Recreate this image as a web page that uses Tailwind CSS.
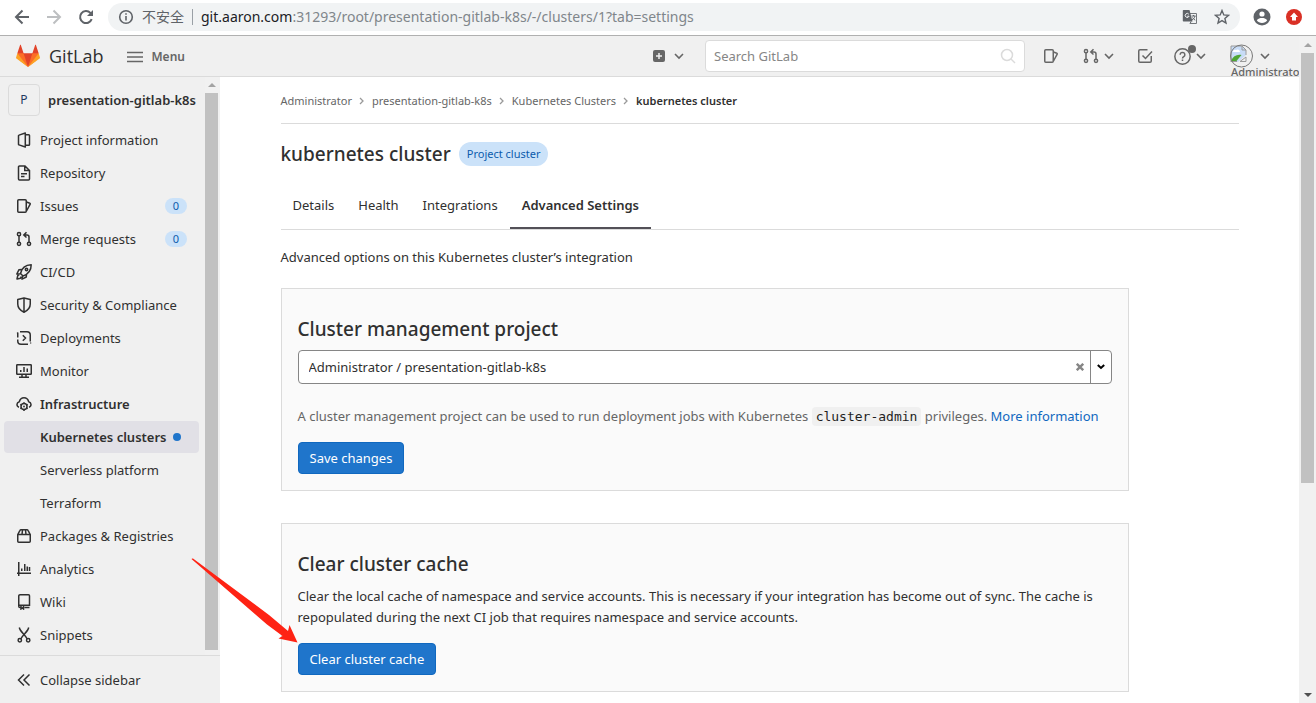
<!DOCTYPE html>
<html lang="en">
<head>
<meta charset="utf-8">
<meta name="viewport" content="width=device-width, initial-scale=1">
<title>kubernetes cluster · GitLab</title>
<script src="https://cdn.jsdelivr.net/npm/@tailwindcss/browser@4"></script>
</head>
<body class="flex h-screen flex-col overflow-hidden bg-white font-['Noto_Sans','Noto_Sans_CJK_SC',sans-serif] text-[13px] leading-5 text-[#303030]">

<!-- Browser toolbar -->
<div class="flex h-9 shrink-0 items-center border-b border-[#b0b0b0] pr-3 pb-px pl-3 text-[#5f6368]">
  <button aria-label="Back" class="flex h-5 w-5 items-center justify-center"><svg width="16" height="16" viewBox="0 0 16 16" fill="none" stroke="currentColor" stroke-width="2"><path d="M15 8H2M8.500 1.500 2 8l6.500 6.500"/></svg></button>
  <button aria-label="Forward" class="ml-3 flex h-5 w-5 items-center justify-center text-[#bdbfc1]"><svg width="16" height="16" viewBox="0 0 16 16" fill="none" stroke="currentColor" stroke-width="2"><path d="M1 8h13M7.500 1.500 14 8l-6.500 6.500"/></svg></button>
  <button aria-label="Reload" class="ml-3 flex h-5 w-5 items-center justify-center"><svg width="16" height="16" viewBox="0 0 16 16" fill="none" stroke="currentColor" stroke-width="2"><path d="M13.700 10.200A6 6 0 1 1 12.400 3.900L14 5.500"/><path d="M15 1v6H9z" fill="currentColor" stroke="none"/></svg></button>
  <div class="ml-3 flex h-7 flex-1 items-center rounded-full bg-[#f1f3f4] pr-2.5 pl-2.5">
    <svg width="16" height="16" viewBox="0 0 16 16" fill="none" stroke="currentColor" stroke-width="1.600"><circle cx="8" cy="8" r="6.300"/><path d="M8 7v4.500M8 4.200v1.600"/></svg>
    <span class="ml-2 text-[14px]">不安全</span>
    <span class="mx-2 h-4 w-px bg-[#9aa0a6]"></span>
    <span class="flex-1 text-[14px] whitespace-nowrap text-[#80868b]"><span class="text-[#202124]">git.aaron.com</span>:31293/root/presentation-gitlab-k8s/-/clusters/1?tab=settings</span>
    <button aria-label="Translate" class="flex h-4 w-4 items-center justify-center"><svg width="16" height="16" viewBox="0 0 16 16" fill="none"><path d="M6.500 4.500h8v10h-6" stroke="#74787c" stroke-width="1"/><path d="M1.500 1h6l3 11.500h-9A.8.8 0 0 1 .8 11.700V1.800A.8.8 0 0 1 1.500 1z" fill="#5f6368"/><path d="M6.800 5.200a2 2 0 1 0 .3 2H5.200" stroke="#f1f3f4"/><path d="M9.500 7h4M11.500 6v1M13 7c-.5 2-1.500 3-3 4M10.500 8.500c.5 1 1.500 2 2.700 2.700M8 15l1-2.500" stroke="#5f6368"/></svg></button>
    <button aria-label="Bookmark" class="ml-4 flex h-4 w-4 items-center justify-center"><svg width="16" height="16" viewBox="0 0 16 16" fill="none" stroke="currentColor" stroke-width="1.400"><path d="m8 1.500 1.800 4.400 4.700.4-3.600 3.100 1.100 4.600L8 11.600 4 14l1.100-4.600L1.500 6.300l4.700-.4z"/></svg></button>
  </div>
  <button aria-label="Profile" class="ml-3 flex h-5 w-5 items-center justify-center"><svg width="18" height="18" viewBox="0 0 18 18"><circle cx="9" cy="9" r="8.500" fill="currentColor"/><circle cx="9" cy="6" r="2.600" fill="#fff"/><path d="M3.800 12.200c1-1.700 3.400-2.200 5.200-2.200s4.200.5 5.200 2.200a6.200 6.200 0 0 1-10.400 0z" fill="#fff"/></svg></button>
  <button aria-label="Update" class="ml-3 flex h-5 w-5 items-center justify-center"><svg width="16" height="16" viewBox="0 0 16 16"><circle cx="8" cy="8" r="8" fill="#d93025"/><path d="M8 3.500 12 8h-2v3.500H6V8H4z" fill="#fff"/></svg></button>
</div>

<div class="flex min-h-0 flex-1">
<div class="flex min-w-0 flex-1 flex-col">

<!-- GitLab header -->
<header class="flex h-[41px] shrink-0 items-center overflow-hidden border-b border-[#dbdbdb] bg-[#f0f0f0] pl-4 text-[#666]">
  <a href="#" class="flex items-center font-['Open_Sans',sans-serif] text-[18px] font-medium text-[#303030]">
    <svg width="24" height="24" viewBox="0 0 36 36" class="mr-[9px]"><path fill="#e24329" d="M2 14l9.380 9v-9l-4-12.280c-.205-.632-1.176-.632-1.380 0z"/><path fill="#e24329" d="M34 14l-9.380 9v-9l4-12.280c.205-.632 1.176-.632 1.380 0z"/><path fill="#e24329" d="M18 34.380 3 14h30z"/><path fill="#fc6d26" d="M18 34.380 11.380 14H2l4 11z"/><path fill="#fc6d26" d="M18 34.380 24.620 14H34l-4 11z"/><path fill="#fca326" d="M2 14 .1 20.160c-.18.565 0 1.200.5 1.560l17.420 12.660z"/><path fill="#fca326" d="M34 14l1.900 6.160c.18.565 0 1.200-.5 1.560L18 34.380z"/></svg>
    GitLab
  </a>
  <button class="ml-6 flex items-center gap-2 pt-px text-[12px] font-semibold"><svg width="16" height="16" viewBox="0 0 16 16" stroke="currentColor" stroke-width="1.500"><path d="M0 3.500h16M0 8h16M0 12.500h16"/></svg>Menu</button>
  <button aria-label="Create new" class="ml-auto flex items-center gap-2">
    <svg width="12" height="12" viewBox="0 0 12 12"><rect width="12" height="12" rx="2" fill="#666"/><path d="M6 3v6M3 6h6" stroke="#f0f0f0" stroke-width="1.500"/></svg>
    <svg width="12" height="12" viewBox="0 0 12 12" fill="none" stroke="currentColor" stroke-width="1.600"><path d="m2 4 4 4 4-4"/></svg>
  </button>
  <label class="ml-5 flex h-8 w-[320px] items-center rounded border border-[#dbdbdb] bg-white px-2">
    <input aria-label="Search GitLab" placeholder="Search GitLab" class="min-w-0 flex-1 bg-transparent outline-none placeholder:text-[#868686]">
    <svg width="16" height="16" viewBox="0 0 16 16" fill="none" stroke="#dbdbdb" stroke-width="1.500"><circle cx="7" cy="7" r="5.500"/><path d="m11 11 4 4"/></svg>
  </label>
  <button aria-label="Issues" class="ml-[18px]"><svg width="16" height="16" viewBox="0 0 16 16" fill="none" stroke="currentColor" stroke-width="1.500"><rect x="1.750" y="1.750" width="8.500" height="12.500" rx="1"/><path d="m10.500 4 3.300 1.200a.7.700 0 0 1 .4.900L10.500 13"/></svg></button>
  <button aria-label="Merge requests" class="ml-6 flex items-center gap-1">
    <svg width="16" height="16" viewBox="0 0 16 16" fill="none" stroke="currentColor" stroke-width="1.500"><circle cx="3" cy="3.200" r="1.600"/><circle cx="3" cy="12.800" r="1.600"/><circle cx="13" cy="12.800" r="1.600"/><path d="M3 5v6M13 11V6a2 2 0 0 0-2-2H8.200M10.500 1.300 7.800 4l2.700 2.500"/></svg>
    <svg width="12" height="12" viewBox="0 0 12 12" fill="none" stroke="currentColor" stroke-width="1.600"><path d="m2 4 4 4 4-4"/></svg>
  </button>
  <button aria-label="To-Do List" class="ml-[22px]"><svg width="16" height="16" viewBox="0 0 16 16" fill="none" stroke="currentColor" stroke-width="1.500"><path d="M10.500 1.750H3a1.250 1.250 0 0 0-1.250 1.250v10c0 .7.550 1.250 1.250 1.250h10c.7 0 1.250-.55 1.250-1.250V8"/><path d="m5.500 7.500 3 3L15 3.500"/></svg></button>
  <button aria-label="Help" class="relative ml-[21px] flex items-center gap-1">
    <svg width="17" height="17" viewBox="0 0 16 16" fill="none" stroke="currentColor" stroke-width="1.400"><circle cx="8" cy="8" r="7.200"/><path d="M5.800 6.300a2.200 2.200 0 1 1 3.400 1.900C8.400 8.700 8 9 8 9.800M8 10.800v1.500"/></svg>
    <svg width="12" height="12" viewBox="0 0 12 12" fill="none" stroke="currentColor" stroke-width="1.600"><path d="m2 4 4 4 4-4"/></svg>
    <span class="absolute -top-[3px] left-3.5 size-2 rounded-full bg-[#666]"></span>
  </button>
  <button aria-label="Administrator" class="relative mr-7 ml-[22px] flex items-center gap-1.5">
    <svg width="24" height="24" viewBox="0 0 24 24"><path d="M2 2h11l4 4v5l-8 7H2z" fill="#c8dcf7"/><path d="M4 8a2 2 0 0 1 3-2 2.500 2.500 0 0 1 4 2z" fill="#fff"/><path d="M2 17c2-5 6-7 10.500-6l-5 6z" fill="#4fa634"/><path d="M2 18V2h11l4 4v5M13 2v4h4M2 17.500h6M11 17.500h6V13z" fill="none" stroke="#9a9a9a"/><circle cx="12.500" cy="12" r="11" fill="none" stroke="#777"/></svg>
    <svg width="12" height="12" viewBox="0 0 12 12" fill="none" stroke="currentColor" stroke-width="1.600"><path d="m2 4 4 4 4-4"/></svg>
    <span class="absolute top-[18px] left-0.5 text-[11px] leading-5 font-medium">Administrator</span>
  </button>
</header>

<div class="flex min-h-0 flex-1">

<!-- Sidebar -->
<aside class="flex w-[220px] shrink-0 flex-col bg-[#f0f0f0]">
  <div class="flex min-h-0 flex-1">
    <nav aria-label="Project" class="flex min-w-0 flex-1 flex-col gap-px pr-1.5 pl-1">
      <a href="#" class="mt-[7px] mb-[7px] ml-1 flex h-8 items-center gap-2 font-semibold whitespace-nowrap"><span class="flex size-8 shrink-0 items-center justify-center rounded border border-[#dbdbdb] text-[12px] font-normal text-[#1f3a5f]">P</span>presentation-gitlab-k8s</a>
      <a href="#" class="flex h-8 shrink-0 items-center gap-2 px-3"><svg width="16" height="16" viewBox="0 0 16 16" fill="none" stroke="currentColor" stroke-width="1.500" stroke-linejoin="round"><path d="M9.300 1 3 3.100a.7.700 0 0 0-.5.700v8.400c0 .3.200.6.500.7L9.300 15zM10 2.750h2.700c.5 0 .8.300.8.800v8.900c0 .5-.3.800-.8.800H10"/></svg>Project information</a>
      <a href="#" class="flex h-8 shrink-0 items-center gap-2 px-3"><svg width="16" height="16" viewBox="0 0 16 16" fill="none" stroke="currentColor" stroke-width="1.500"><path d="M9 .95H3.500a1 1 0 0 0-1 1v12.100a1 1 0 0 0 1 1h9a1 1 0 0 0 1-1V5.500zM8.750 1v4.500h4.500M5 8.750h6M5 11.500h3.500"/></svg>Repository</a>
      <a href="#" class="flex h-8 shrink-0 items-center gap-2 px-3"><svg width="16" height="16" viewBox="0 0 16 16" fill="none" stroke="currentColor" stroke-width="1.500"><rect x="1.750" y="1.750" width="8.500" height="12.500" rx="1"/><path d="m10.500 4 3.300 1.200a.7.700 0 0 1 .4.900L10.500 13"/></svg>Issues<span class="ml-auto rounded-full bg-[#cbe2f9] px-2 text-[11px] leading-4 text-[#0b5cad]">0</span></a>
      <a href="#" class="flex h-8 shrink-0 items-center gap-2 px-3"><svg width="16" height="16" viewBox="0 0 16 16" fill="none" stroke="currentColor" stroke-width="1.500"><circle cx="3" cy="3.200" r="1.600"/><circle cx="3" cy="12.800" r="1.600"/><circle cx="13" cy="12.800" r="1.600"/><path d="M3 5v6M13 11V6a2 2 0 0 0-2-2H8.200M10.500 1.300 7.800 4l2.700 2.500"/></svg>Merge requests<span class="ml-auto rounded-full bg-[#cbe2f9] px-2 text-[11px] leading-4 text-[#0b5cad]">0</span></a>
      <a href="#" class="flex h-8 shrink-0 items-center gap-2 px-3"><svg width="16" height="16" viewBox="0 0 16 16" fill="none" stroke="currentColor" stroke-width="1.500" stroke-linejoin="round"><path d="M4.500 9.500C5.500 5 9 1 15.200.8 15.200 6.500 11.500 10.500 7 12zM5.500 5.500 3 5.700.8 10l3.400-.3M10.500 10l-.2 3L6 15.200l.5-3.200M3.300 10.700l-1.500.8L1 15l3.500-.8.800-1.500"/><circle cx="10.500" cy="5.500" r="1.200"/></svg>CI/CD</a>
      <a href="#" class="flex h-8 shrink-0 items-center gap-2 px-3"><svg width="16" height="16" viewBox="0 0 16 16" fill="none" stroke="currentColor" stroke-width="1.500" stroke-linejoin="round"><path d="M8 1 1.750 2.500V7c0 4 2.500 6.500 6.250 8.200C11.750 13.500 14.250 11 14.250 7V2.500zM8 1v14"/></svg>Security &amp; Compliance</a>
      <a href="#" class="flex h-8 shrink-0 items-center gap-2 px-3"><svg width="16" height="16" viewBox="0 0 16 16" fill="none" stroke="currentColor" stroke-width="1.500"><path d="M1.750 7.500V2.500M.9 3h.9M4 1.750h7a3.250 3.250 0 0 1 3.250 3.250v6.500M15.200 13h-.9M12 14.250H5A3.250 3.250 0 0 1 1.750 11V9.500M6.800 5.300 9.500 8l-2.700 2.700"/></svg>Deployments</a>
      <a href="#" class="flex h-8 shrink-0 items-center gap-2 px-3"><svg width="16" height="16" viewBox="0 0 16 16" fill="none" stroke="currentColor" stroke-width="1.500"><rect x=".75" y="1.750" width="14.500" height="9.500" rx=".6"/><path d="M4.750 9V7M8 9V4M11.250 9V5.500M6 11v3M10 11v3M3 14.250h10"/></svg>Monitor</a>
      <a href="#" class="flex h-8 shrink-0 items-center gap-2 px-3 font-semibold"><svg width="16" height="16" viewBox="0 0 16 16" fill="none" stroke="currentColor" stroke-width="1.500"><path d="M3 11.300A2.900 2.900 0 0 1 3.300 5.700C4 3 5.800 1.750 8 1.750S12 3 12.700 5.700a2.900 2.900 0 0 1 .3 5.600"/><circle cx="8" cy="10.500" r="3"/><path d="M8 6.200v1.500M8 13.300v1.700M4.300 8.400l1.300.7M10.400 11.900l1.300.7M11.700 8.400l-1.300.7M5.600 11.900l-1.300.7"/><circle cx="8" cy="10.500" r=".9" fill="currentColor" stroke="none"/></svg>Infrastructure</a>
      <a href="#" aria-current="page" class="flex h-8 shrink-0 items-center gap-1.5 rounded bg-[#e1e0e6] pr-3 pl-9 font-semibold whitespace-nowrap">Kubernetes clusters<span class="size-2 rounded-full bg-[#1f75cb]"></span></a>
      <a href="#" class="flex h-8 shrink-0 items-center pl-9">Serverless platform</a>
      <a href="#" class="flex h-8 shrink-0 items-center pl-9">Terraform</a>
      <a href="#" class="flex h-8 shrink-0 items-center gap-2 px-3"><svg width="16" height="16" viewBox="0 0 16 16" fill="none" stroke="currentColor" stroke-width="1.500" stroke-linejoin="round"><path d="M1.750 6.500 4 2.300c.2-.4.500-.6 1-.6h6c.5 0 .8.200 1 .6l2.250 4.200v6.750a1 1 0 0 1-1 1H2.750a1 1 0 0 1-1-1zM1.750 6.500h12.500M6.500 2 6 6.500M9.500 2l.5 4.500"/></svg>Packages &amp; Registries</a>
      <a href="#" class="flex h-8 shrink-0 items-center gap-2 px-3"><svg width="16" height="16" viewBox="0 0 16 16" fill="none" stroke="currentColor" stroke-width="1.500"><path d="M2.750 1v14M1 12.250h14M5.750 10V7.500M8.750 10V3M11.250 10V5.500M13.500 10V6"/></svg>Analytics</a>
      <a href="#" class="flex h-8 shrink-0 items-center gap-2 px-3"><svg width="16" height="16" viewBox="0 0 16 16" fill="none" stroke="currentColor" stroke-width="1.500"><path d="M3.500 11.250h10V1.750a1 1 0 0 0-1-1h-8.500a1.250 1.250 0 0 0-1.250 1.250v10.200c0 .8.600 1.300 1.300 1.300H5M8.500 13.500h5M5 12v3l1.300-1L7.500 15v-3"/></svg>Wiki</a>
      <a href="#" class="flex h-8 shrink-0 items-center gap-2 px-3"><svg width="16" height="16" viewBox="0 0 16 16" fill="none" stroke="currentColor" stroke-width="1.500"><path d="M3.300.5C4 4.500 9 7.500 11.300 12M12.700.5C12 4.500 7 7.500 4.700 12"/><circle cx="3.800" cy="13.300" r="1.700"/><circle cx="12.200" cy="13.300" r="1.700"/></svg>Snippets</a>
    </nav>
    <div aria-hidden="true" class="flex w-[15px] shrink-0 flex-col bg-[#f1f1f1] pr-0.5 pb-[5px]">
      <div class="flex h-4 shrink-0 items-center justify-center"><svg width="8" height="4" viewBox="0 0 8 4"><path d="M4 0 8 4H0z" fill="#a3a3a3"/></svg></div>
      <div class="flex-1 bg-[#c1c1c1]"></div>
    </div>
  </div>
  <button class="flex h-12 shrink-0 items-center gap-2 border-t border-[#dbdbdb] px-4"><svg width="16" height="16" viewBox="0 0 16 16" fill="none" stroke="currentColor" stroke-width="1.500"><path d="M8 2.500 2.500 8 8 13.500M13.500 2.500 8 8l5.500 5.500"/></svg>Collapse sidebar</button>
</aside>

<!-- Page content -->
<main class="min-w-0 flex-1 overflow-hidden">
<div class="mx-auto max-w-[990px] px-4">
  <nav aria-label="Breadcrumb" class="flex h-[47px] items-center gap-1.5 border-b border-[#dbdbdb] pt-0.5 text-[11px] text-[#666]">
    <a href="#">Administrator</a>
    <svg width="8" height="8" viewBox="0 0 8 8" fill="none" stroke="#999" stroke-width="1.300"><path d="m2 1 3 3-3 3"/></svg>
    <a href="#">presentation-gitlab-k8s</a>
    <svg width="8" height="8" viewBox="0 0 8 8" fill="none" stroke="#999" stroke-width="1.300"><path d="m2 1 3 3-3 3"/></svg>
    <a href="#">Kubernetes Clusters</a>
    <svg width="8" height="8" viewBox="0 0 8 8" fill="none" stroke="#999" stroke-width="1.300"><path d="m2 1 3 3-3 3"/></svg>
    <a href="#" class="font-semibold text-[#303030]">kubernetes cluster</a>
  </nav>
  <div class="mt-4 flex h-7 items-center gap-2">
    <h1 class="text-[19px] font-medium">kubernetes cluster</h1>
    <span class="rounded-full bg-[#cbe2f9] px-2 text-[11px] leading-6 text-[#0b5cad]">Project cluster</span>
  </div>
  <div role="tablist" class="mt-3 flex h-[50px] border-b border-[#dbdbdb]">
    <button role="tab" class="px-3">Details</button>
    <button role="tab" class="px-3">Health</button>
    <button role="tab" class="px-3">Integrations</button>
    <button role="tab" aria-selected="true" class="border-b-2 border-[#535158] px-3 pt-0.5 font-semibold">Advanced Settings</button>
  </div>
  <p class="mt-[17px]">Advanced options on this Kubernetes cluster’s integration</p>

  <section class="mt-[21px] max-w-[848px] border border-[#dbdbdb] bg-[#fafafa] p-4">
    <h2 class="mt-3 text-[19px] leading-6 font-medium">Cluster management project</h2>
    <div class="mt-[9px] flex h-[34px] rounded border border-[#868686] bg-white">
      <select aria-label="Cluster management project" class="min-w-0 flex-1 appearance-none bg-transparent px-2.5"><option>Administrator / presentation-gitlab-k8s</option></select>
      <button aria-label="Clear selection" class="px-1.5"><svg width="8" height="8" viewBox="0 0 8 8" stroke="#868686" stroke-width="2.400"><path d="m.8.800 6.400 6.400M7.200.800.8 7.200"/></svg></button>
      <button aria-label="Show projects" class="flex w-[21px] items-center justify-center border-l border-[#868686]"><svg width="8" height="6" viewBox="0 0 8 6" fill="none" stroke="#000" stroke-width="2"><path d="m.8 1 3.200 3L7.200 1"/></svg></button>
    </div>
    <p class="mt-[22px] whitespace-nowrap text-[#666]">A cluster management project can be used to run deployment jobs with Kubernetes <code class="rounded bg-[#f0f0f0] px-1 py-0.5 font-['DejaVu_Sans_Mono',monospace] text-[13px] text-[#1f1f1f]">cluster-admin</code> privileges. <a href="#" class="text-[#1068bf]">More information</a></p>
    <button class="mt-[15px] h-8 rounded border border-[#1068bf] bg-[#1f75cb] px-[11px] text-white">Save changes</button>
  </section>

  <section class="mt-8 max-w-[848px] border border-[#dbdbdb] bg-[#fafafa] p-4">
    <h2 class="mt-3 text-[19px] leading-6 font-medium">Clear cluster cache</h2>
    <p class="mt-2.5 leading-[21px]">Clear the local cache of namespace and service accounts. This is necessary if your integration has become out of sync. The cache is repopulated during the next CI job that requires namespace and service accounts.</p>
    <button class="mt-[15px] h-8 rounded border border-[#1068bf] bg-[#1f75cb] px-[11px] text-white">Clear cluster cache</button>
  </section>
</div>
</main>
</div>
</div>

<!-- Page scrollbar -->
<div aria-hidden="true" class="flex w-[17px] shrink-0 flex-col bg-[#f1f1f1] px-0.5">
  <div class="flex h-[17px] shrink-0 items-center justify-center"><svg width="8" height="4" viewBox="0 0 8 4"><path d="M4 0 8 4H0z" fill="#a3a3a3"/></svg></div>
  <div class="flex-1"><div class="h-[68%] bg-[#c1c1c1]"></div></div>
  <div class="flex h-[17px] shrink-0 items-center justify-center"><svg width="8" height="4" viewBox="0 0 8 4"><path d="M0 0h8L4 4z" fill="#505050"/></svg></div>
</div>
</div>

<!-- Annotation arrow -->
<svg class="pointer-events-none absolute top-[558px] left-[191px]" width="108" height="86" viewBox="0 0 108 86"><path d="M.5 1C.8.400 1.500.200 2 .600L78 57l19 16 1.500-6L106.500 84.500 87.500 80.500 91.500 78 76 66.500z" fill="#fe2314"/></svg>
</body>
</html>
